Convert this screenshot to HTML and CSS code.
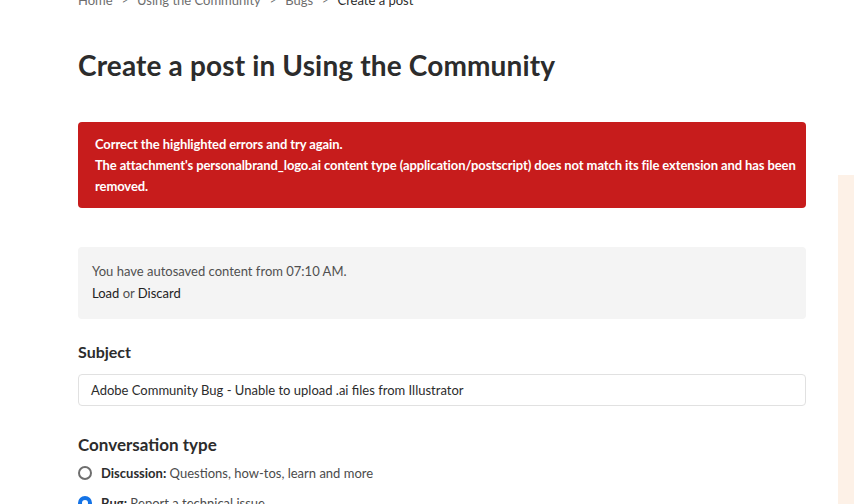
FILE: index.html
```html
<!DOCTYPE html>
<html lang="en">
<head>
<meta charset="utf-8">
<title>Create a post in Using the Community</title>
<link rel="stylesheet" href="styles.css">
</head>
<body>
<div class="page">
  <main class="main">
    <nav class="crumbs">
      <a class="crumb">Home</a><span class="sep">&gt;</span>
      <a class="crumb">Using the Community</a><span class="sep">&gt;</span>
      <a class="crumb">Bugs</a><span class="sep">&gt;</span>
      <span class="crumb current">Create a post</span>
    </nav>
    <h1 class="title">Create a post in Using the Community</h1>
    <div class="error">
      <p>Correct the highlighted errors and try again.</p>
      <p>The attachment's personalbrand_logo.ai content type (application/postscript) does not match its file extension and has been removed.</p>
    </div>
    <div class="autosave">
      <p>You have autosaved content from 07:10 AM.</p>
      <p><a class="act">Load</a> or <a class="act">Discard</a></p>
    </div>
    <h2 class="label">Subject</h2>
    <div class="input">Adobe Community Bug - Unable to upload .ai files from Illustrator</div>
    <h2 class="label label-conv">Conversation type</h2>
    <div class="radios">
      <label class="radio"><span class="dot"></span><span><b>Discussion:</b> Questions, how-tos, learn and more</span></label>
      <label class="radio"><span class="dot on"></span><span><b>Bug:</b> Report a technical issue</span></label>
    </div>
  </main>
  <aside class="side"></aside>
</div>
</body>
</html>
```
FILE: styles.css
```css
* { box-sizing: border-box; }
html, body { margin: 0; padding: 0; background: #fff; overflow: hidden; }
body { font-family: Lato, "Noto Sans", sans-serif; color: #2c2c2c; }
p { margin: 0; }
.page { display: flex; width: 854px; height: 504px; }
.main { width: 728px; margin-left: 78px; margin-top: -9px; }
.side { margin-left: 32px; margin-top: 175px; flex: 1; background: #fdf1e7; }
.crumbs { font-size: 13px; line-height: 18px; color: #6e6e6e; display: flex; }
.sep { margin: 0 9px; font-size: 11px; }
.current { color: #2c2c2c; }
.title { font-size: 28px; font-weight: 700; margin: 38px 0 0; line-height: 36px; color: #2c2c2c; letter-spacing: 0.15px; }
.error { margin-top: 39px; background: #c71c1c; border-radius: 4px; padding: 12px 6px 11px 17px; color: #fff; font-weight: 700; font-size: 13px; line-height: 21px; letter-spacing: -0.1px; }
.autosave { margin-top: 39px; background: #f4f4f4; border-radius: 4px; padding: 13px 14px 15px; font-size: 13px; line-height: 22px; color: #505050; }
.act { color: #222; }
.label { font-size: 16px; font-weight: 700; margin: 22px 0 0; line-height: 22px; }
.input { margin-top: 11px; height: 32px; border: 1px solid #e1e1e1; border-radius: 4px; padding: 0 12px; font-size: 13px; line-height: 30px; color: #2c2c2c; }
.label-conv { font-size: 17px; margin-top: 28px; }
.radios { margin-top: 6px; display: flex; flex-direction: column; gap: 8px; }
.radio { display: flex; align-items: center; gap: 9px; font-size: 13px; line-height: 22px; color: #4b4b4b; }
.radio b { color: #2c2c2c; }
.dot { width: 14px; height: 14px; border: 2px solid #6e6e6e; border-radius: 50%; flex: none; }
.dot.on { border: 4px solid #1473e6; }
```
